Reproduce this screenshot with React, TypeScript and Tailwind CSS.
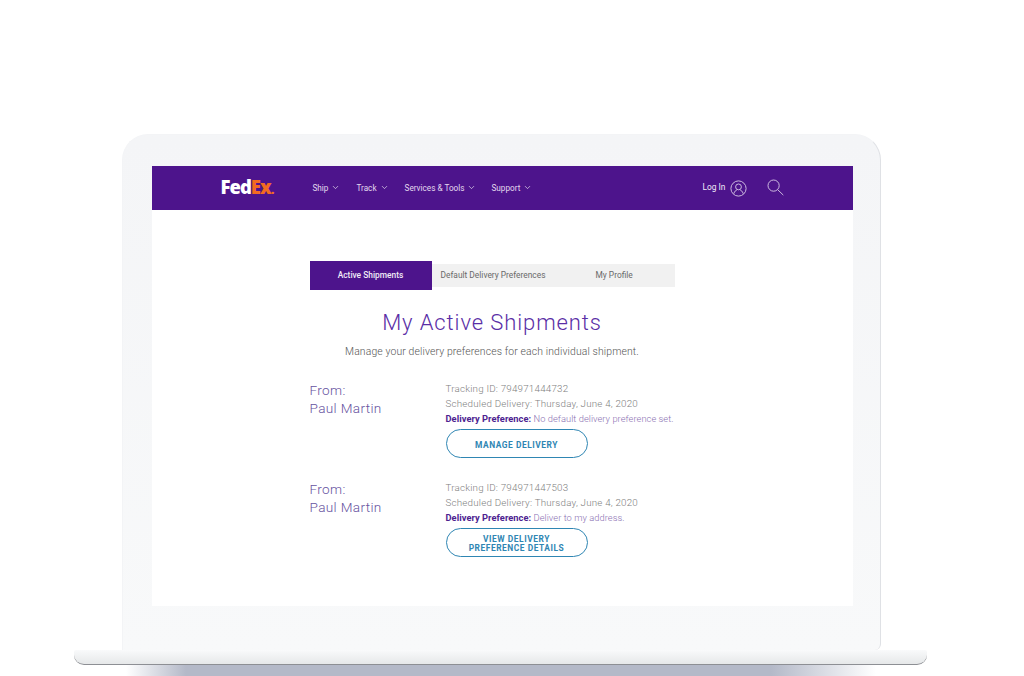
import React from "react";
import { ChevronDown } from "lucide-react";

const navItems = [
  { label: "Ship", cls: "mr-[16px]" },
  { label: "Track", cls: "mr-[16px]" },
  { label: "Services & Tools", cls: "mr-[15px]" },
  { label: "Support", cls: "" },
];

type Shipment = {
  id: string;
  preference: string;
  action: string[];
  pad: string;
};

const shipments: Shipment[] = [
  {
    id: "794971444732",
    preference: "No default delivery preference set.",
    action: ["MANAGE DELIVERY"],
    pad: "mb-[22px]",
  },
  {
    id: "794971447503",
    preference: "Deliver to my address.",
    action: ["VIEW DELIVERY", "PREFERENCE DETAILS"],
    pad: "",
  },
];

const UserIcon = () => (
  <svg width="17" height="17" viewBox="0 0 17 17" fill="none" stroke="#d9cbe8" strokeWidth="0.9">
    <circle cx="8.5" cy="8.5" r="7.6" />
    <circle cx="8.5" cy="6.9" r="2.9" />
    <path d="M3.9 13.6c.5-2.2 2-3.4 3-3.6M13.1 13.6c-.5-2.2-2-3.4-3-3.6" />
  </svg>
);

const SearchIcon = () => (
  <svg width="17" height="17" viewBox="0 0 17 17" fill="none" stroke="#d9cbe8" strokeWidth="0.9">
    <circle cx="6.6" cy="6.6" r="5.6" />
    <path d="M10.7 10.7l5.6 5.4" />
  </svg>
);

const Header = () => (
  <div className="flex items-center h-[44px] bg-[#4d148c] pl-[69px] shrink-0">
    <div className="w-[92px] font-['Open_Sans',sans-serif] font-extrabold text-[18.5px] leading-none tracking-[-1px] mt-[-1px]">
      <span className="text-white">Fed</span>
      <span className="text-[#f26a21]">Ex</span>
      <span className="text-[#f26a21] text-[13px]">.</span>
    </div>
    <div className="flex items-center text-[8.2px] text-[#e3d9ee] w-[390px]">
      {navItems.map((item) => (
        <div key={item.label} className={`flex items-center gap-[3px] ${item.cls}`}>
          <span>{item.label}</span>
          <ChevronDown size={9} strokeWidth={1.6} color="#ffffff" />
        </div>
      ))}
    </div>
    <div className="flex items-center text-[8.4px] text-[#f1ebf7]">
      <span className="mr-[5px] mt-[-1px]">Log In</span>
      <UserIcon />
      <span className="ml-[20px] mt-[-2px]">
        <SearchIcon />
      </span>
    </div>
  </div>
);

const Tabs = () => (
  <div className="flex items-center w-[365px] h-[29px] text-[8.4px]">
    <div className="flex items-center justify-center w-[122px] h-[29px] bg-[#4d148c] text-[#f1ebf7] font-medium">
      Active Shipments
    </div>
    <div className="flex items-center flex-1 h-[23px] bg-[#f1f1f1] text-[#6a6a6a]">
      <span className="ml-[9px] w-[155px]">Default Delivery Preferences</span>
      <span>My Profile</span>
    </div>
  </div>
);

const ShipmentRow = ({ shipment }: { shipment: Shipment }) => (
  <div className={`flex ${shipment.pad}`}>
    <div className="w-[136px] text-[13.6px] leading-[18px] tracking-[0.35px] font-light text-[#6652a0]">
      <div>From:</div>
      <div>Paul Martin</div>
    </div>
    <div className="flex-1 text-[9.8px] leading-[15px] tracking-[0.2px] font-light">
      <div className="text-[#808080]">Tracking ID: {shipment.id}</div>
      <div className="text-[#808080]">Scheduled Delivery: Thursday, June 4, 2020</div>
      <div className="text-[#8a70b2] text-[9.3px] tracking-[0.05px] whitespace-nowrap">
        <span className="font-bold text-[#4d2390]">Delivery Preference:</span> {shipment.preference}
      </div>
      <button className="flex flex-col items-center justify-center w-[142px] h-[29px] mt-[3px] pt-[3px] rounded-full border border-[#2f86b3] bg-white text-[8.4px] leading-[9px] font-bold tracking-[0.55px] text-[#2f86b3]">
        {shipment.action.map((line) => (
          <span key={line}>{line}</span>
        ))}
      </button>
    </div>
  </div>
);

const Screen = () => (
  <div className="flex flex-col w-[701px] h-[440px] bg-white">
    <Header />
    <div className="flex flex-col pl-[158px] pt-[51px]">
      <Tabs />
      <div className="w-[365px] text-center mt-[20px] text-[22px] leading-[26px] font-light tracking-[0.9px] text-[#5a2ea6]">
        My Active Shipments
      </div>
      <div className="w-[365px] text-center mt-[8px] text-[10.4px] leading-[16px] font-light tracking-[0.13px] text-[#555555]">
        Manage your delivery preferences for each individual shipment.
      </div>
      <div className="mt-[21px] flex flex-col">
        {shipments.map((shipment) => (
          <ShipmentRow key={shipment.id} shipment={shipment} />
        ))}
      </div>
    </div>
  </div>
);

export default function App() {
  return (
    <div className="flex flex-col items-center w-[1024px] h-[676px] overflow-hidden bg-white pt-[134px] pr-[22px] font-['Roboto',sans-serif]">
      {/* lid */}
      <div className="w-[759px] h-[516px] shrink-0 rounded-t-[26px] rounded-br-[6px] bg-gradient-to-b from-[#f4f5f7] to-[#f8f9fa] border-x border-t border-l-[#f3f4f6] border-t-[#f3f4f6] border-r-[#dfe1e5] pt-[31px] pl-[29px]">
        <Screen />
      </div>
      {/* base */}
      <div className="w-[853px] h-[15px] shrink-0 ml-[-2px] rounded-t-[2px] rounded-b-[10px] bg-gradient-to-b from-[#f9fafb] to-[#e6e8e9] border-b border-[#8d8f94]" />
      {/* shadow under the base */}
      <div className="w-[750px] h-[11px] shrink-0 bg-[linear-gradient(90deg,#ffffff,#b4b9c8_8%,#b4b9c8_86%,#ffffff)]" />
    </div>
  );
}
